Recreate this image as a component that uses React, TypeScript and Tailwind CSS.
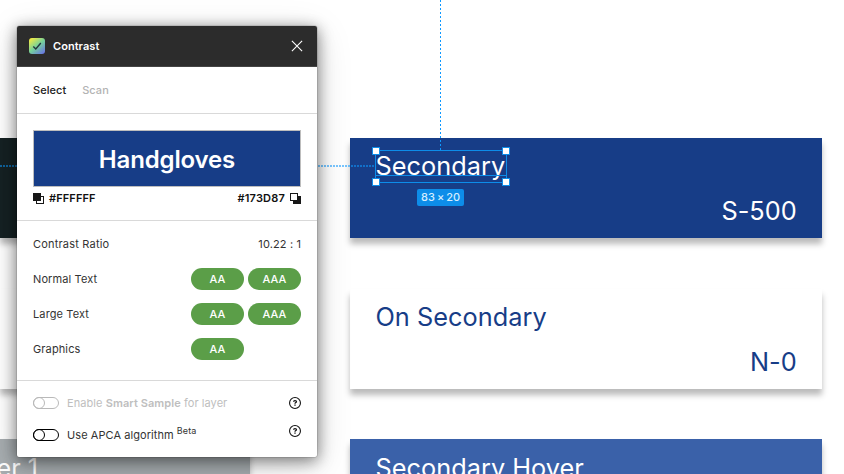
import React from "react";

const CARD_SHADOW = "shadow-[0_6px_6px_rgba(0,0,0,0.27)]";

function TokenCard({ title, code, tone, selected = false }: { title: string; code?: string; tone: string; selected?: boolean }) {
  return (
    <article className={`flex h-[100px] w-[471.5px] shrink-0 flex-col justify-between pt-[11.4px] pr-[25px] pb-[10px] pl-[26px] text-[25.3px] leading-[34px] tracking-[0.03px] ${CARD_SHADOW} ${tone}`}>
      <div className="flex">
        <span className="relative whitespace-nowrap">
          <span className="-ml-[0.7px]">{title}</span>
          {selected && <Selection />}
        </span>
      </div>
      {code && <span className="self-end whitespace-nowrap">{code}</span>}
    </article>
  );
}

function Selection() {
  const handle = "absolute size-[8px] border border-[#0d8de9] bg-white";
  return (
    <span className="absolute -left-[1px] top-[0.6px] h-[33px] w-[132px] border border-[#0d8de9]">
      <span className="absolute left-0 top-[24px] h-px w-[130px] bg-[#0d8de9]" />
      <span className={`${handle} -left-[4px] -top-[4px]`} />
      <span className={`${handle} -right-[4px] -top-[4px]`} />
      <span className={`${handle} -bottom-[4px] -left-[4px]`} />
      <span className={`${handle} -bottom-[4px] -right-[4px]`} />
      <span className="absolute left-[41px] top-[38px] flex h-[17px] w-[47px] items-center justify-center whitespace-nowrap rounded-[2px] bg-[#0d8de9] text-[11px] font-medium leading-none tracking-[0.1px] text-[#d5edff] [word-spacing:-1.2px]">
        83 × 20
      </span>
    </span>
  );
}

function SwapIcon({ flipped = false }: { flipped?: boolean }) {
  return (
    <svg width="11" height="11" viewBox="0 0 11 11" className="shrink-0" shapeRendering="crispEdges">
      {flipped ? (
        <>
          <path d="M3 3h8v8H3z" fill="#171717" />
          <path d="M.5 .5h7v7h-7z" fill="#fff" stroke="#171717" />
        </>
      ) : (
        <>
          <path d="M3.5 3.5h7v7h-7z" fill="#fff" stroke="#171717" />
          <path d="M0 0h8v8H0z" fill="#171717" />
        </>
      )}
    </svg>
  );
}

function Toggle({ tone }: { tone: string }) {
  return (
    <svg width="26" height="12" viewBox="0 0 26 12" fill="none" className={`shrink-0 ${tone}`} stroke="currentColor">
      <rect x=".5" y=".5" width="25" height="11" rx="5.5" />
      <circle cx="6" cy="6" r="5.5" />
    </svg>
  );
}

function HelpIcon() {
  return (
    <svg width="12" height="12" viewBox="0 0 12 12" fill="none" stroke="#111" className="shrink-0">
      <circle cx="6" cy="6" r="5.45" strokeWidth="1.1" />
      <path d="M4.6 4.7C4.6 3.9 5.2 3.5 6 3.5s1.5.45 1.5 1.15c0 .9-1.5.95-1.5 2" strokeWidth="1.25" />
      <path d="M6 7.6v1.2" strokeWidth="1.3" />
    </svg>
  );
}

function Pill({ children }: { children: React.ReactNode }) {
  return <span className="flex h-[22px] w-[53px] items-center justify-center rounded-full bg-[#5b9e48] text-[11px] font-medium tracking-[0.1px] text-white">{children}</span>;
}

function ResultRow({ label, grades }: { label: string; grades: string[] }) {
  return (
    <div className="flex h-[35px] items-center">
      <span className="w-[158px]">{label}</span>
      <div className="flex gap-1">
        {grades.map((g) => (
          <Pill key={g}>{g}</Pill>
        ))}
      </div>
    </div>
  );
}

function ContrastPanel() {
  return (
    <section className="absolute left-[17px] top-[26px] flex h-[431px] w-[300px] flex-col rounded-[2px] bg-white text-[11px] leading-4 tracking-[0.12px] text-[#333] shadow-[0_2px_14px_rgba(0,0,0,0.3),0_5px_17px_rgba(0,0,0,0.25),0_8px_36px_rgba(0,0,0,0.15),0_0_0_0.5px_rgba(0,0,0,0.2)]">
      <header className="flex h-[41px] items-center rounded-t-[2px] border-b border-[#444] bg-[#2c2c2c] pl-3 pr-[14px] text-white">
        <svg width="16" height="16" viewBox="0 0 16 16" fill="none">
          <defs>
            <linearGradient id="logo" x1="1" y1="0" x2="14" y2="16" gradientUnits="userSpaceOnUse">
              <stop stopColor="#ffed3b" />
              <stop offset=".52" stopColor="#75d29b" />
              <stop offset="1" stopColor="#6976e4" />
            </linearGradient>
          </defs>
          <rect width="16" height="16" rx="3" fill="url(#logo)" />
          <path d="M4.3 8.5 6.8 11l5-6" stroke="#26363d" strokeWidth="1.4" />
        </svg>
        <h1 className="ml-2 flex-1 text-[11px] font-semibold tracking-[0.05px]">Contrast</h1>
        <svg width="12" height="12" viewBox="0 0 12 12" stroke="white" strokeWidth="1.1">
          <path d="m.9.9 10.2 10.2M11.1.9.9 11.1" />
        </svg>
      </header>
      <nav className="flex h-[47px] items-center gap-4 border-b border-[#d9d9d9] px-4 font-medium tracking-[0.05px]">
        <span className="text-[#222]">Select</span>
        <span className="text-[#b3b3b3]">Scan</span>
      </nav>
      <div className="flex h-[107px] flex-col border-b border-[#d9d9d9] px-4 pt-4">
        <div className="flex h-[57px] items-center justify-center border border-[#bdbdbd] bg-[#173d87] pt-0.5 text-[24px] font-semibold tracking-[-0.15px] text-white">
          Handgloves
        </div>
        <div className="flex h-[23px] items-center text-[11px] font-semibold tracking-[0.1px] text-[#111]">
          <SwapIcon />
          <span className="-mt-px ml-[5px] flex-1">#FFFFFF</span>
          <span className="-mt-px mr-[5px] tracking-[0.2px]">#173D87</span>
          <SwapIcon flipped />
        </div>
      </div>
      <div className="flex h-[160px] flex-col border-b border-[#d9d9d9] px-4 pt-[5px]">
        <div className="flex h-[35px] items-center justify-between">
          <span className="tracking-[0.2px]">Contrast Ratio</span>
          <span>10.22 : 1</span>
        </div>
        <ResultRow label="Normal Text" grades={["AA", "AAA"]} />
        <ResultRow label="Large Text" grades={["AA", "AAA"]} />
        <ResultRow label="Graphics" grades={["AA"]} />
      </div>
      <div className="flex flex-col px-4 pt-[14px] tracking-[0.07px]">
        <div className="flex h-4 items-center">
          <Toggle tone="text-[#b9b9b9]" />
          <span className="ml-2 flex-1 text-[#bebebe]">
            Enable <b className="font-semibold">Smart Sample</b> for layer
          </span>
          <HelpIcon />
        </div>
        <div className="mt-3 flex h-7 items-start">
          <div className="mt-[4px] flex h-4 flex-1 items-center">
            <Toggle tone="text-black" />
            <span className="ml-2">Use APCA algorithm</span>
            <span className="mb-[9px] ml-[3px] text-[9px] leading-none tracking-[0.15px]">Beta</span>
          </div>
          <span className="mt-[2px]">
            <HelpIcon />
          </span>
        </div>
      </div>
    </section>
  );
}

export default function App() {
  return (
    <main className="relative h-[474px] w-[844px] overflow-hidden bg-white font-[Inter,sans-serif]">
      <div className="flex gap-[100.2px] pt-[138px]">
        <div className="flex w-[250px] shrink-0 flex-col gap-[50.7px]">
          <div className={`h-[100px] bg-[#162224] ${CARD_SHADOW}`} />
          <div className={`h-[100px] bg-white ${CARD_SHADOW}`} />
          <div className={`h-[100px] bg-[#a7adb0] pt-[12px] text-[25.2px] leading-[34px] text-white ${CARD_SHADOW}`}>
            <span className="flex w-[38px] justify-end whitespace-nowrap">Layer 1</span>
          </div>
        </div>
        <div className="flex flex-col gap-[50.7px]">
          <TokenCard title="Secondary" code="S-500" tone="bg-[#173d87] text-white" selected />
          <TokenCard title="On Secondary" code="N-0" tone="bg-white text-[#173d87]" />
          <TokenCard title="Secondary Hover" tone="bg-[#3a61a9] text-white" />
        </div>
      </div>
      <div className="absolute left-0 top-[165px] h-[2px] w-[375px] bg-[repeating-linear-gradient(90deg,#0d99ff_0_2px,transparent_2px_3px)] opacity-55" />
      <div className="absolute left-[440px] top-0 h-[150px] w-px bg-[repeating-linear-gradient(180deg,#0d99ff_0_2px,transparent_2px_4px)]" />
      <ContrastPanel />
    </main>
  );
}
